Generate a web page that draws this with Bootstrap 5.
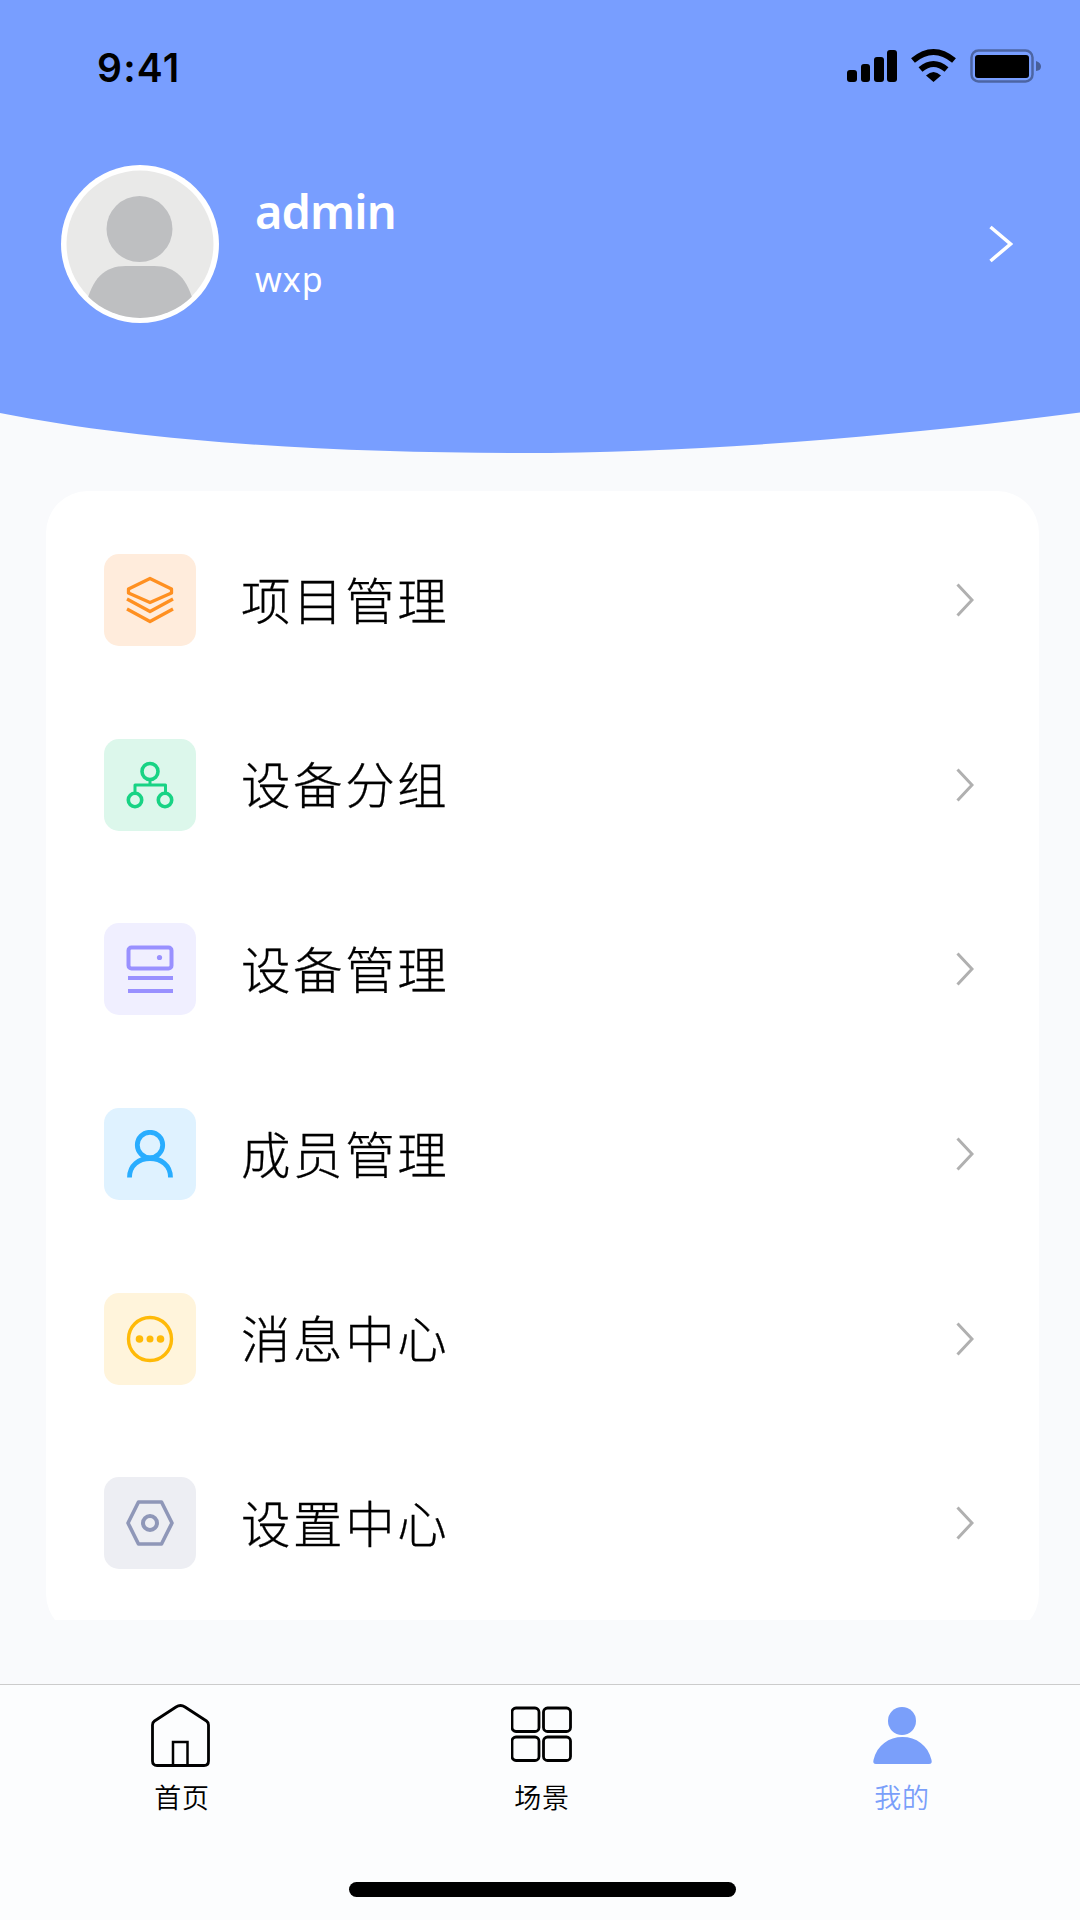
<!DOCTYPE html>
<html lang="zh-CN">
<head>
<meta charset="utf-8">
<meta name="viewport" content="width=device-width, initial-scale=1">
<title>我的</title>
<link href="https://cdn.jsdelivr.net/npm/bootstrap@5.3.0/dist/css/bootstrap.min.css" rel="stylesheet">
<style>
body{background:#f9fafc;font-family:"Noto Sans","Noto Sans CJK SC",sans-serif;color:#000}
svg{display:block;flex:none}
.screen{width:1080px;height:1920px}
.hero{height:412px;background:#789eff}
.statusbar{height:134px;padding:0 39px 0 97px}
.statusbar svg{margin-bottom:2px}
.clock{font:600 39px/1 Inter,sans-serif;letter-spacing:1.2px}
.profile{height:220px;padding:0 67px 0 61px}
.who{margin-left:36px}
.uname{font-size:47px;font-weight:600;line-height:60px;letter-spacing:-.9px}
.uorg{font-size:34px;line-height:44px;margin:16px 0 7px;letter-spacing:1px}
.menu-clip{height:1129px;margin:38px 41px 0 46px}
.menu{height:1145px;border-radius:42px;padding-top:17px}
.menu-row{height:184.6px;padding:0 65px 0 58px;color:#000}
.tile{width:92px;height:92px;border-radius:15px}
.tile-orange{background:#ffecdc}
.tile-green{background:#dcf7eb}
.tile-violet{background:#f0efff}
.tile-sky{background:#dff2ff}
.tile-amber{background:#fff4db}
.tile-slate{background:#edeef3}
.menu-label{font-family:"Noto Sans CJK SC",sans-serif;font-weight:300;-webkit-text-stroke:.3px #000;font-size:49.5px;line-height:60px;letter-spacing:2.6px;margin:0 0 3px 45px}
.tabs{height:236px;background:#fcfdfe;border-top:1px solid #ccc}
.tab{flex:1 1 0;color:#000;padding:15px 0 0 3px}
.tab-label{font-family:"Noto Sans CJK SC",sans-serif;font-weight:350;font-size:27px;line-height:36px;letter-spacing:.8px;margin:11px 0 0 1px}
.tab.current{color:#7a9ffa}
.home-bar{width:387px;height:15px;border-radius:8px;background:#000;margin:0 0 23px 5px}
</style>
<script src="https://cdn.jsdelivr.net/npm/bootstrap@5.3.0/dist/js/bootstrap.bundle.min.js"></script>
</head>
<body>
<div class="screen d-flex flex-column overflow-hidden">
  <header>
    <div class="hero">
      <div class="statusbar d-flex align-items-center justify-content-between">
        <span class="clock">9:41</span>
        <svg width="194" height="36" viewBox="847 48 194 36">
          <g><rect x="847" y="70" width="10" height="12" rx="3"/><rect x="861" y="64" width="9" height="18" rx="3"/><rect x="874" y="57" width="10" height="25" rx="3"/><rect x="887" y="50" width="10" height="32" rx="3"/></g>
          <g fill="none" stroke="#000" stroke-width="6"><path d="M913 60.5Q933.500 43.500 954 60.500"/><path d="M920.500 69.500Q933.500 58.500 946.500 69.500"/></g>
          <path d="M926 75.500Q933.500 68.500 941 75.500L933.500 82Z"/>
          <rect x="971.500" y="50.500" width="61" height="31" rx="7" fill="none" stroke="#000" stroke-opacity=".36" stroke-width="2.500"/>
          <rect x="975" y="55" width="54" height="23" rx="3"/>
          <path d="M1036 61Q1041 62.500 1041 66.500T1036 71Z" opacity=".4"/>
        </svg>
      </div>
      <div class="profile d-flex align-items-center text-white">
        <svg width="158" height="158" viewBox="0 0 158 158">
          <defs><clipPath id="face"><circle cx="79" cy="79" r="74"/></clipPath></defs>
          <circle cx="79" cy="79" r="79" fill="#fff"/><circle cx="79" cy="79" r="73.500" fill="#e9e9e8"/>
          <g fill="#bebfc1" clip-path="url(#face)"><circle cx="78.500" cy="64" r="33"/><path d="M25 140C31 114 43 101 65 101H93C115 101 127 114 133 140V158H25Z"/></g>
        </svg>
        <div class="who flex-grow-1">
          <div class="uname">admin</div>
          <div class="uorg">wxp</div>
        </div>
        <svg width="24" height="38" viewBox="0 0 24 38"><path d="M1.500 2L21.500 19L1.500 36" fill="none" stroke="#fff" stroke-width="3.500"/></svg>
      </div>
    </div>
    <svg width="1080" height="41" viewBox="0 412 1080 41"><path d="M0 411V413C150 443 340 453 520 453S900 436 1080 412.500V411Z" fill="#789eff"/></svg>
  </header>

  <main class="menu-clip overflow-hidden">
    <nav class="menu bg-white">
      <a class="menu-row d-flex align-items-center text-decoration-none" href="#">
        <span class="tile tile-orange d-flex align-items-center justify-content-center"><svg width="48" height="48" viewBox="0 0 48 48" fill="none" stroke="#ff9021" stroke-width="3.300" stroke-linejoin="round"><path d="M24 2.500L45.500 13V17L24 26.500L2.500 17V13Z"/><path d="M1 23L24 35.500L47 23"/><path d="M1 33L24 45.500L47 33"/></svg></span>
        <span class="menu-label flex-grow-1">项目管理</span>
        <svg width="18" height="34" viewBox="0 0 18 34"><path d="M1.500 1.500L16 17L1.500 32.500" fill="none" stroke="#b0b0b0" stroke-width="3"/></svg>
      </a>
      <a class="menu-row d-flex align-items-center text-decoration-none" href="#">
        <span class="tile tile-green d-flex align-items-center justify-content-center"><svg width="48" height="48" viewBox="0 0 48 48" fill="none" stroke="#18d384" stroke-width="3.600"><circle cx="24" cy="10.500" r="8"/><circle cx="9" cy="39" r="6.700"/><circle cx="39" cy="39" r="6.700"/><path d="M24 18.500V24M9 32V24H39.500V32" stroke-width="3" stroke-linejoin="round"/></svg></span>
        <span class="menu-label flex-grow-1">设备分组</span>
        <svg width="18" height="34" viewBox="0 0 18 34"><path d="M1.500 1.500L16 17L1.500 32.500" fill="none" stroke="#b0b0b0" stroke-width="3"/></svg>
      </a>
      <a class="menu-row d-flex align-items-center text-decoration-none" href="#">
        <span class="tile tile-violet d-flex align-items-center justify-content-center"><svg width="48" height="48" viewBox="0 0 48 48" fill="none" stroke="#9990ff" stroke-width="4"><rect x="2.500" y="2.500" width="43" height="21" rx="3"/><path d="M2 33H47M2 46H47"/><circle cx="33.500" cy="12.500" r="2.600" fill="#9990ff" stroke="none"/></svg></span>
        <span class="menu-label flex-grow-1">设备管理</span>
        <svg width="18" height="34" viewBox="0 0 18 34"><path d="M1.500 1.500L16 17L1.500 32.500" fill="none" stroke="#b0b0b0" stroke-width="3"/></svg>
      </a>
      <a class="menu-row d-flex align-items-center text-decoration-none" href="#">
        <span class="tile tile-sky d-flex align-items-center justify-content-center"><svg width="48" height="48" viewBox="0 0 48 48" fill="none" stroke="#29adff" stroke-width="4.800"><circle cx="24" cy="15" r="12.700"/><path d="M3.500 47.500C3.500 35 13 28.500 24 28.500S44.500 35 44.500 47.500"/></svg></span>
        <span class="menu-label flex-grow-1">成员管理</span>
        <svg width="18" height="34" viewBox="0 0 18 34"><path d="M1.500 1.500L16 17L1.500 32.500" fill="none" stroke="#b0b0b0" stroke-width="3"/></svg>
      </a>
      <a class="menu-row d-flex align-items-center text-decoration-none" href="#">
        <span class="tile tile-amber d-flex align-items-center justify-content-center"><svg width="48" height="48" viewBox="0 0 48 48"><circle cx="24" cy="24" r="21.500" fill="none" stroke="#ffba08" stroke-width="3.400"/><g fill="#ffba08"><circle cx="13.500" cy="24" r="3.800"/><circle cx="24" cy="24" r="3.500"/><circle cx="34.500" cy="24" r="3.800"/></g></svg></span>
        <span class="menu-label flex-grow-1">消息中心</span>
        <svg width="18" height="34" viewBox="0 0 18 34"><path d="M1.500 1.500L16 17L1.500 32.500" fill="none" stroke="#b0b0b0" stroke-width="3"/></svg>
      </a>
      <a class="menu-row d-flex align-items-center text-decoration-none" href="#">
        <span class="tile tile-slate d-flex align-items-center justify-content-center"><svg width="48" height="48" viewBox="0 0 48 48" fill="none" stroke="#8f97b8"><path d="M12.500 3H35.500L46 24L35.500 45H12.500L2 24Z" stroke-width="3.600" stroke-linejoin="round"/><circle cx="24" cy="24" r="7" stroke-width="4"/></svg></span>
        <span class="menu-label flex-grow-1">设置中心</span>
        <svg width="18" height="34" viewBox="0 0 18 34"><path d="M1.500 1.500L16 17L1.500 32.500" fill="none" stroke="#b0b0b0" stroke-width="3"/></svg>
      </a>
    </nav>
  </main>

  <footer class="tabs mt-auto d-flex flex-column align-items-center justify-content-between">
    <nav class="d-flex w-100">
      <a class="tab d-flex flex-column align-items-center text-decoration-none" href="#">
        <svg width="62" height="68" viewBox="0 0 62 68" fill="none" stroke="#000" stroke-width="2.800"><path d="M1.500 25C1.500 23 2 22 3.500 21L25 7Q29.500 4 34 7L55.500 21C57 22 57.500 23 57.500 25V61Q57.500 65.500 53 65.500H6Q1.500 65.500 1.500 61Z"/><path d="M22 65V42H36.500V65" stroke-width="2.500"/></svg>
        <span class="tab-label">首页</span>
      </a>
      <a class="tab d-flex flex-column align-items-center text-decoration-none" href="#">
        <svg width="62" height="68" viewBox="0 0 62 68" fill="none" stroke="#000" stroke-width="2.800"><rect x="1" y="8" width="27" height="23.500" rx="4"/><rect x="32.500" y="8" width="27" height="23.500" rx="4"/><rect x="1" y="37" width="27" height="23.500" rx="4"/><rect x="32.500" y="37" width="27" height="23.500" rx="4"/></svg>
        <span class="tab-label">场景</span>
      </a>
      <a class="tab current d-flex flex-column align-items-center text-decoration-none" href="#">
        <svg width="62" height="68" viewBox="0 0 62 68" fill="#7a9ffa"><circle cx="31" cy="21" r="14"/><path d="M5 64Q1.500 64 2.500 60C6 45 18 37 31.500 37S57 45 60.500 60Q61.500 64 58 64Z"/></svg>
        <span class="tab-label">我的</span>
      </a>
    </nav>
    <div class="home-bar"></div>
  </footer>
</div>
</body>
</html>
